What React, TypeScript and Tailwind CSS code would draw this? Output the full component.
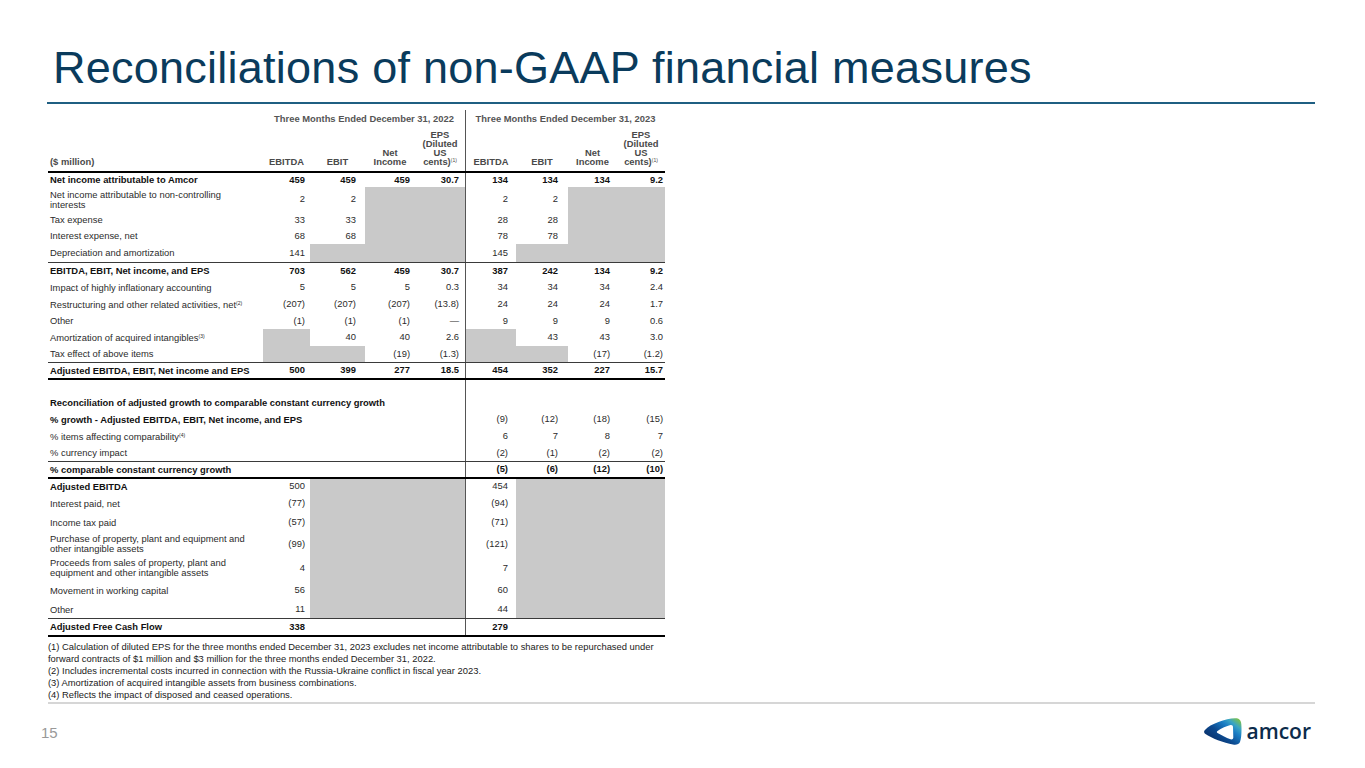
import React from 'react';

type Cell = string | null; // null = shaded cell

const colW = ['w-[47px]', 'w-[55px]', 'w-[50px]', 'w-[50px]', 'w-[51px]', 'w-[52px]', 'w-[49px]', 'w-[48px]'];
const colP = ['pr-[5px]', 'pr-[9px]', 'pr-[5px]', 'pr-[6px]', 'pr-[8px]', 'pr-[10px]', 'pr-[7px]', 'pr-[2px]'];

function Sup({ n }: { n: number }) {
  return <sup className="text-[5px] -top-[3px] font-normal">({n})</sup>;
}

function Thick() {
  return <div className="h-[2px] w-full bg-black" />;
}

function Thin() {
  return <div className="h-px w-full bg-[#3a3a3a]" />;
}

interface RowProps {
  label?: React.ReactNode;
  cells?: Cell[];
  bold?: boolean;
  boldNums?: boolean;
  wide?: boolean;
  h: string;
}

function Row({ label, cells, bold, boldNums, wide, h }: RowProps) {
  const vals = cells ?? ['', '', '', '', '', '', '', ''];
  const start = wide ? 4 : 0;
  return (
    <div className={`flex ${h}`}>
      <div
        className={`${wide ? 'w-[417px]' : 'w-[215px]'} flex items-center pl-[2px] leading-[10px] whitespace-nowrap ${
          bold ? 'font-bold text-[#111]' : 'text-[#2b2b2b]'
        }`}
      >
        {label}
      </div>
      {vals.slice(start).map((v, j) => {
        const i = j + start;
        return (
          <div
            key={i}
            className={`${colW[i]} ${colP[i]} flex items-center justify-end ${
              i === 4 ? 'border-l border-[#555]' : ''
            } ${v === null ? 'bg-[#c9c9c9]' : ''} ${boldNums ? 'font-bold text-[#111]' : 'text-[#2b2b2b]'}`}
          >
            {v}
          </div>
        );
      })}
    </div>
  );
}

function ColHead({ i, children }: { i: number; children: React.ReactNode }) {
  return (
    <div
      className={`${colW[i]} flex items-end justify-center pb-[5px] ${i === 4 ? 'border-l border-[#555]' : ''}`}
    >
      <div className="text-center leading-[9px]">{children}</div>
    </div>
  );
}

function AmcorLogo() {
  return (
    <div className="flex items-center gap-[4px]">
      <svg width="38" height="27" viewBox="0 0 38 27">
        <defs>
          <linearGradient id="amcorGrad" x1="0" y1="0.8" x2="0.9" y2="0">
            <stop offset="0" stopColor="#0a2a60" />
            <stop offset="0.4" stopColor="#0c4a90" />
            <stop offset="0.66" stopColor="#1a7cc4" />
            <stop offset="0.82" stopColor="#3aa5c4" />
            <stop offset="1" stopColor="#7cc24a" />
          </linearGradient>
        </defs>
        <path
          fillRule="evenodd"
          fill="url(#amcorGrad)"
          d="M1,12 C6,6 22,0.5 31,0.3 C35,0.2 37,2 37.3,6 C37.8,12 37.5,20 36,24 C35,26.5 32,27 29,26.5 C20,25 7,20 1.5,16 C-0.3,15 -0.3,13 1,12 Z M13.5,13 C17,10.5 23,7.8 26.5,7 C28,6.7 29,7.6 29,9 L29.3,19.5 C29.3,21 28,21.8 26.5,21.3 C22,19.8 17,17 13.5,15 C12.6,14.5 12.6,13.5 13.5,13 Z"
        />
      </svg>
      <span className="font-['Open_Sans',sans-serif] font-semibold text-[21px] leading-[21px] text-[#0c2b4b]">
        amcor
      </span>
    </div>
  );
}

export default function App() {
  return (
    <div className="w-[1365px] h-[768px] bg-white flex flex-col overflow-hidden font-['Liberation_Sans',Arial,sans-serif]">
      {/* Title */}
      <h1 className="ml-[53px] mt-[43px] h-[50px] leading-[50px] text-[45px] tracking-[0.25px] text-[#0a3b5c] whitespace-nowrap">
        Reconciliations of non-GAAP financial measures
      </h1>
      <div className="ml-[47px] mt-[9px] w-[1268px] h-[2px] bg-[#1f5f82]" />

      {/* Table */}
      <div className="ml-[48px] mt-[6px] w-[617px] text-[9.4px]">
        <div className="flex h-[18px] font-bold text-[#555]">
          <div className="w-[215px]" />
          <div className="w-[202px] flex items-center justify-center">Three Months Ended December 31, 2022</div>
          <div className="w-[200px] flex items-center justify-center border-l border-[#555]">
            Three Months Ended December 31, 2023
          </div>
        </div>
        <div className="flex h-[43px] font-bold text-[#4a4a4a]">
          <div className="w-[215px] flex items-end pl-[2px] pb-[5px] leading-[9px]">($ million)</div>
          {[0, 4].map((s) => (
            <React.Fragment key={s}>
              <ColHead i={s}>EBITDA</ColHead>
              <ColHead i={s + 1}>EBIT</ColHead>
              <ColHead i={s + 2}>
                Net
                <br />
                Income
              </ColHead>
              <ColHead i={s + 3}>
                EPS
                <br />
                (Diluted
                <br />
                US
                <br />
                cents)
                <Sup n={1} />
              </ColHead>
            </React.Fragment>
          ))}
        </div>
        <Thick />
        <Row h="h-[14px]" bold boldNums label="Net income attributable to Amcor" cells={['459', '459', '459', '30.7', '134', '134', '134', '9.2']} />
        <Row
          h="h-[25px]"
          label={
            <span>
              Net income attributable to non-controlling
              <br />
              interests
            </span>
          }
          cells={['2', '2', null, null, '2', '2', null, null]}
        />
        <Row h="h-[16px]" label="Tax expense" cells={['33', '33', null, null, '28', '28', null, null]} />
        <Row h="h-[16px]" label="Interest expense, net" cells={['68', '68', null, null, '78', '78', null, null]} />
        <Row h="h-[18px]" label="Depreciation and amortization" cells={['141', null, null, null, '145', null, null, null]} />
        <Thin />
        <Row h="h-[16px]" bold boldNums label="EBITDA, EBIT, Net income, and EPS" cells={['703', '562', '459', '30.7', '387', '242', '134', '9.2']} />
        <Row h="h-[17px]" label="Impact of highly inflationary accounting" cells={['5', '5', '5', '0.3', '34', '34', '34', '2.4']} />
        <Row
          h="h-[17px]"
          label={
            <span>
              Restructuring and other related activities, net
              <Sup n={2} />
            </span>
          }
          cells={['(207)', '(207)', '(207)', '(13.8)', '24', '24', '24', '1.7']}
        />
        <Row h="h-[16px]" label="Other" cells={['(1)', '(1)', '(1)', '—', '9', '9', '9', '0.6']} />
        <Row
          h="h-[17px]"
          label={
            <span>
              Amortization of acquired intangibles
              <Sup n={3} />
            </span>
          }
          cells={[null, '40', '40', '2.6', null, '43', '43', '3.0']}
        />
        <Row h="h-[16px]" label="Tax effect of above items" cells={[null, null, '(19)', '(1.3)', null, null, '(17)', '(1.2)']} />
        <Thin />
        <Row h="h-[15px]" bold boldNums label="Adjusted EBITDA, EBIT, Net income and EPS" cells={['500', '399', '277', '18.5', '454', '352', '227', '15.7']} />
        <Thick />
        <Row h="h-[15px]" wide />
        <Row h="h-[16px]" wide bold label="Reconciliation of adjusted growth to comparable constant currency growth" />
        <Row h="h-[17px]" wide bold label="% growth - Adjusted EBITDA, EBIT, Net income, and EPS" cells={['', '', '', '', '(9)', '(12)', '(18)', '(15)']} />
        <Row
          h="h-[17px]"
          wide
          label={
            <span>
              % items affecting comparability
              <Sup n={4} />
            </span>
          }
          cells={['', '', '', '', '6', '7', '8', '7']}
        />
        <Row h="h-[16px]" wide label="% currency impact" cells={['', '', '', '', '(2)', '(1)', '(2)', '(2)']} />
        <Thin />
        <Row h="h-[15px]" wide bold boldNums label="% comparable constant currency growth" cells={['', '', '', '', '(5)', '(6)', '(12)', '(10)']} />
        <Thick />
        <Row h="h-[15px]" bold label="Adjusted EBITDA" cells={['500', null, null, null, '454', null, null, null]} />
        <Row h="h-[19px]" label="Interest paid, net" cells={['(77)', null, null, null, '(94)', null, null, null]} />
        <Row h="h-[19px]" label="Income tax paid" cells={['(57)', null, null, null, '(71)', null, null, null]} />
        <Row
          h="h-[24px]"
          label={
            <span>
              Purchase of property, plant and equipment and
              <br />
              other intangible assets
            </span>
          }
          cells={['(99)', null, null, null, '(121)', null, null, null]}
        />
        <Row
          h="h-[24px]"
          label={
            <span>
              Proceeds from sales of property, plant and
              <br />
              equipment and other intangible assets
            </span>
          }
          cells={['4', null, null, null, '7', null, null, null]}
        />
        <Row h="h-[21px]" label="Movement in working capital" cells={['56', null, null, null, '60', null, null, null]} />
        <Row h="h-[17px]" label="Other" cells={['11', null, null, null, '44', null, null, null]} />
        <Thin />
        <Row h="h-[16px]" bold boldNums label="Adjusted Free Cash Flow" cells={['338', '', '', '', '279', '', '', '']} />
        <Thick />
      </div>

      {/* Footnotes */}
      <div className="ml-[48px] mt-[4px] text-[9.4px] leading-[12px] text-[#1a1a1a] whitespace-nowrap">
        <p>
          (1) Calculation of diluted EPS for the three months ended December 31, 2023 excludes net income attributable to shares to be repurchased under
        </p>
        <p>forward contracts of $1 million and $3 million for the three months ended December 31, 2022.</p>
        <p>(2) Includes incremental costs incurred in connection with the Russia-Ukraine conflict in fiscal year 2023.</p>
        <p>(3) Amortization of acquired intangible assets from business combinations.</p>
        <p>(4) Reflects the impact of disposed and ceased operations.</p>
      </div>

      {/* Footer */}
      <div className="mt-auto h-[66px] flex flex-col">
        <div className="ml-[48px] w-[1267px] h-[2px] bg-[#d6d6d6]" />
        <div className="flex justify-between">
          <span className="ml-[41px] mt-[20px] text-[15px] leading-[17px] text-[#999]">15</span>
          <div className="mr-[54px] mt-[14px]">
            <AmcorLogo />
          </div>
        </div>
      </div>
    </div>
  );
}
